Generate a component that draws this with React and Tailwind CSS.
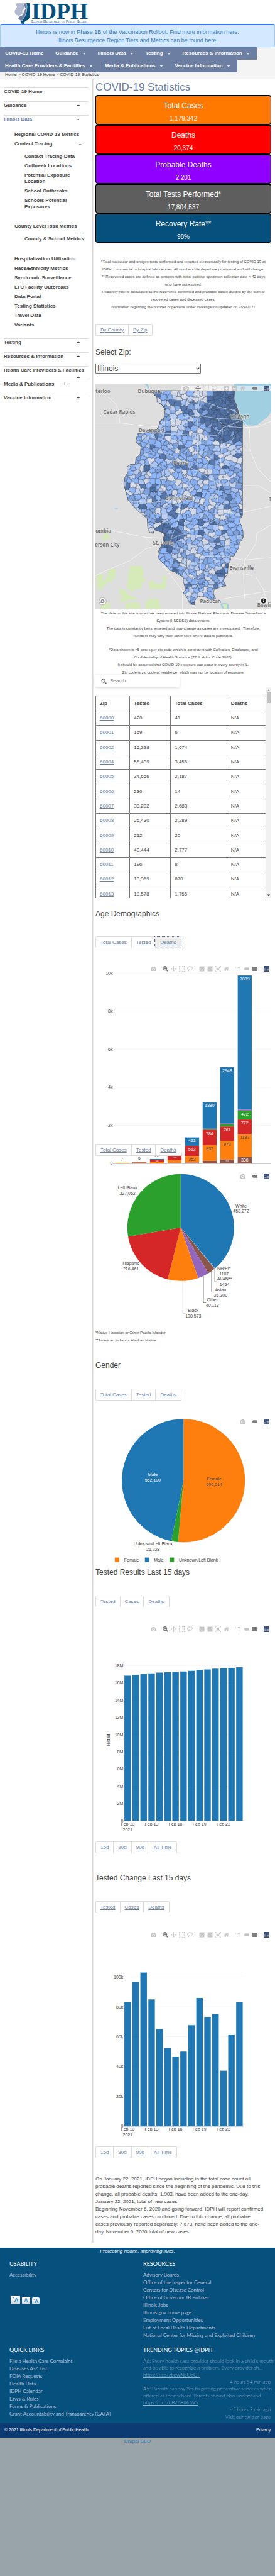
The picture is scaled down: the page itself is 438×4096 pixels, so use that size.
import React from 'react';

const ICONS = {
  camera: { w: 1000, d: 'm500 450c-83 0-150-67-150-150 0-83 67-150 150-150 83 0 150 67 150 150 0 83-67 150-150 150z m400 150h-120c-16 0-34 13-39 29l-31 93c-6 15-23 28-40 28h-340c-16 0-34-13-39-28l-31-94c-6-15-23-28-40-28h-120c-55 0-100-45-100-100v-450c0-55 45-100 100-100h800c55 0 100 45 100 100v450c0 55-45 100-100 100z m-400-550c-138 0-250 112-250 250 0 138 112 250 250 250 138 0 250-112 250-250 0-138-112-250-250-250z m365 380c-19 0-35 16-35 35 0 19 16 35 35 35 19 0 35-16 35-35 0-19-16-35-35-35z' },
  zoom: { w: 1000, d: 'm1000-25l-250 251c40 63 63 138 63 218 0 224-182 406-407 406-224 0-406-182-406-406s183-406 407-406c80 0 155 22 218 62l250-250 125 125z m-812 250l0 438 437 0 0-438-437 0z m62 375l313 0 0-312-313 0 0 312z' },
  pan: { w: 1000, d: 'm1000 350l-187 188 0-125-250 0 0 250 125 0-188 187-187-187 125 0 0-250-250 0 0 125-188-188 186-187 0 125 252 0 0-250-125 0 187-188 188 188-125 0 0 250 250 0 0-126 187 188z' },
  select: { w: 1000, d: 'm0 850l0-143 143 0 0 143-143 0z m286 0l0-143 143 0 0 143-143 0z m285 0l0-143 143 0 0 143-143 0z m286 0l0-143 143 0 0 143-143 0z m-857-286l0-143 143 0 0 143-143 0z m857 0l0-143 143 0 0 143-143 0z m-857-285l0-143 143 0 0 143-143 0z m857 0l0-143 143 0 0 143-143 0z m-857-286l0-143 143 0 0 143-143 0z m286 0l0-143 143 0 0 143-143 0z m285 0l0-143 143 0 0 143-143 0z m286 0l0-143 143 0 0 143-143 0z' },
  lasso: { w: 1031, d: 'm1018 538c-36 207-290 336-568 286-277-48-473-256-436-463 10-57 36-108 76-151-13-66 11-137 68-183 34-28 75-41 114-42l-55-70 0 0c-2-1-3-2-4-3-10-14-8-34 5-45 14-11 34-8 45 4 1 1 2 3 2 5l0 0 113 140c16 11 31 24 45 40 4 3 6 7 8 11 48-3 100 0 151 9 278 48 473 255 436 462z m-624-379c-80 14-149 48-197 96 42 42 109 47 156 9 33-26 47-66 41-105z m-187-74c-19 16-33 37-39 60 50-32 109-55 174-68-42-25-95-24-135 8z m360 75c-34-7-69-9-102-8 8 62-16 128-68 170-73 59-175 54-244-5-9 20-16 40-20 61-28 159 121 317 333 354s407-60 434-217c28-159-121-318-333-355z' },
  plus: { w: 875, d: 'm1 787l0-875 875 0 0 875-875 0z m687-500l-187 0 0-187-125 0 0 187-188 0 0 125 188 0 0 187 125 0 0-187 187 0 0-125z' },
  minus: { w: 875, d: 'm0 788l0-876 876 0 0 876-876 0z m688-500l-500 0 0 125 500 0 0-125z' },
  autoscale: { w: 1000, d: 'm250 850l-187 0-63 0 0-62 0-188 63 0 0 188 187 0 0 62z m688 0l-188 0 0-62 188 0 0-188 62 0 0 188 0 62-62 0z m-875-938l0 188-63 0 0-188 0-62 63 0 187 0 0 62-187 0z m875 188l0-188-188 0 0-62 188 0 62 0 0 62 0 188-62 0z m-125 188l-1 0-93-94-156 156 156 156 92-93 2 0 0 250-250 0 0-2 93-92-156-156-156 156 94 92 0 2-250 0 0-250 0 0 93 93 157-156-157-156-93 94 0 0 0-250 250 0 0 0-94 93 156 157 156-157-93-93 0 0 250 0 0 250z' },
  home: { w: 928, d: 'm786 296v-267q0-15-11-26t-25-10h-214v214h-143v-214h-214q-15 0-25 10t-11 26v267q0 1 0 2t0 2l321 264 321-264q1-1 1-4z m124 39l-34-41q-5-5-12-6h-2q-7 0-12 3l-386 322-386-322q-7-4-13-4-7 2-12 7l-35 41q-4 5-3 13t6 12l401 334q18 15 42 15t43-15l136-114v109q0 8 5 13t13 5h107q8 0 13-5t5-13v-227l122-102q5-5 6-12t-4-13z' },
  spike: { w: 1000, t: 'matrix(1.5 0 0 -1.5 0 850)', d: 'M512 409c0-57-46-104-103-104-57 0-104 47-104 104 0 57 47 103 104 103 57 0 103-46 103-103z m-327-39l92 0 0 92-92 0z m-185 0l92 0 0 92-92 0z m370-186l92 0 0 93-92 0z m0-184l92 0 0 92-92 0z' },
  tag: { w: 1500, d: 'm375 725l0 0-375-375 375-374 0-1 1125 0 0 750-1125 0z' },
  compare: { w: 1125, d: 'm187 786l0 2-187-188 188-187 0 0 937 0 0 373-938 0z m0-499l0 1-187-188 188-188 0 0 937 0 0 376-938-1z' },
};

function Icon({ name, on }) {
  if (name === 'logo') {
    return (
      <svg viewBox="0 0 132 132" className="block size-[9px]">
        <rect width="132" height="132" rx="4" fill="#3F4F75" />
        <g fill="#80CFBE">
          <circle cx="30" cy="30" r="6" /><circle cx="54" cy="30" r="6" /><circle cx="78" cy="30" r="6" />
          <circle cx="102" cy="30" r="6" /><circle cx="30" cy="54" r="6" /><circle cx="78" cy="54" r="6" />
        </g>
        <path fill="#fff" d="M24 78h12v30h-12zM48 54h12v54h-12zM72 78h12v30h-12zM96 54h12v54h-12z" />
      </svg>
    );
  }
  const icon = ICONS[name];
  return (
    <svg viewBox={`0 0 ${icon.w} 1000`} className="block size-[9px]" fill={on ? '#7c7c7c' : '#c6c6c6'}>
      <path transform={icon.t || 'matrix(1 0 0 -1 0 850)'} d={icon.d} />
    </svg>
  );
}

const FULL = [['camera'], ['zoom', 'pan', 'select', 'lasso'], ['plus', 'minus', 'autoscale', 'home'], ['spike', 'tag', 'compare'], ['logo']];
const PIE = [['camera'], ['tag'], ['logo']];
const MAP = [['camera'], ['pan', 'select', 'lasso'], ['plus', 'minus', 'home'], ['tag'], ['logo']];

function Modebar({ groups, active, tint }) {
  return (
    <div className={`absolute right-0 top-[6px] flex gap-[10px] px-[3px] ${tint ? 'bg-white/50' : ''}`}>
      {groups.map((g, i) => (
        <div key={i} className="flex gap-[4px]">
          {g.map((n) => (
            <button key={n} type="button" aria-label={n} className="block">
              <Icon name={n} on={active.includes(n)} />
            </button>
          ))}
        </div>
      ))}
    </div>
  );
}

function T({ x, y, a = 'middle', s = 7, f = '#444', children, ...r }) {
  return (
    <text x={x} y={y + s * 0.35} textAnchor={a} fontSize={s} fill={f} {...r}>{children}</text>
  );
}

function Tabs({ items, active, className = '' }) {
  return (
    <div className={`flex ${className}`}>
      <div className="flex h-[19px] rounded-[2px] border border-[#ddd] bg-white">
        {items.map((t, i) => (
          <a
            key={t}
            href={`#${t}`}
            className={`flex items-center px-[7px] text-[8px] text-[#6c7fa3] underline ${i ? 'border-l border-[#ddd]' : ''} ${active === t ? 'bg-[#eee] outline-1 outline-dotted outline-[#5a6f9a]' : ''}`}
          >
            {t}
          </a>
        ))}
      </div>
    </div>
  );
}

/* ---------- map ---------- */
const OUTLINE = 'M915 73L1338 75L1336 130L1350 165L1362 215L1370 240L1384 265L1384 870L1372 890L1366 910L1378 935L1386 970L1388 1010L1378 1030L1366 1045L1360 1080L1345 1110L1335 1130L1312 1130L1317 1155L1303 1180L1298 1245L1280 1270L1275 1290L1290 1320L1250 1330L1222 1345L1218 1370L1230 1400L1222 1408L1205 1410L1180 1395L1150 1385L1130 1390L1110 1415L1110 1440L1085 1437L1070 1400L1047 1365L1060 1345L1047 1295L1045 1262L1020 1250L1000 1232L972 1222L955 1200L920 1165L902 1140L902 1105L917 1070L935 1040L932 1015L942 990L915 975L880 962L875 985L855 980L843 950L840 890L790 845L732 775L718 720L707 670L712 630L727 600L725 560L745 545L772 542L776 505L800 480L805 430L775 400L785 350L830 342L880 335L905 308L912 270L935 250L942 200L930 170L897 145L895 115L868 88Z';
const SHADES = ['#8fb6f8', '#7da2dd', '#a9c6f6', '#d3dbea', '#5577ae', '#bccff0', '#4c6ea3', '#89aff0'];

function buildZips() {
  let s = 77;
  const rnd = () => {
    s = (s * 1664525 + 1013904223) % 4294967296;
    return s / 4294967296;
  };
  const X0 = 700, Y0 = 70, C = 6, W = 116, H = 230;
  const seeds = [];
  for (let gy = 0; gy < 44; gy++) {
    for (let gx = 0; gx < 23; gx++) {
      const x = (gx + rnd()) * 30.5, y = (gy + rnd()) * 31.5;
      const near = Math.hypot(x - 630, y - 150);
      const south = Math.hypot(x - 260, y - 930);
      const r = rnd();
      let c;
      if (near < 190 || south < 80) c = r < 0.75 ? (r < 0.4 ? 4 : 6) : 1;
      else c = r < 0.28 ? 0 : r < 0.4 ? 1 : r < 0.53 ? 2 : r < 0.68 ? 3 : r < 0.76 ? 4 : r < 0.86 ? 5 : r < 0.89 ? 6 : 7;
      seeds.push([x, y, c]);
    }
  }
  for (let i = 0; i < 170; i++) {
    seeds.push([690 - rnd() * rnd() * 210, 5 + rnd() * 270, rnd() < 0.5 ? 4 : 6]);
  }
  const grid = [];
  for (let j = 0; j < H; j++) {
    const row = [];
    for (let i = 0; i < W; i++) {
      const x = i * C + (rnd() - 0.5) * 5, y = j * C + (rnd() - 0.5) * 5;
      let best = 0, bd = 1e9;
      for (let k = 0; k < seeds.length; k++) {
        const dx = seeds[k][0] - x, dy = seeds[k][1] - y;
        const d = Math.max(Math.abs(dx), Math.abs(dy)) * 1.1 + (Math.abs(dx) + Math.abs(dy)) * 0.4;
        if (d < bd) { bd = d; best = k; }
      }
      row.push(best);
    }
    grid.push(row);
  }
  const fills = SHADES.map(() => '');
  let edges = '';
  for (let j = 0; j < H; j++) {
    let st = 0;
    for (let i = 1; i <= W; i++) {
      if (i === W || grid[j][i] !== grid[j][st]) {
        const c = seeds[grid[j][st]][2];
        fills[c] += `M${X0 + st * C} ${Y0 + j * C}h${(i - st) * C}v${C + 1}h-${(i - st) * C}z`;
        st = i;
      }
    }
    for (let i = 0; i < W; i++) {
      if (i && grid[j][i] !== grid[j][i - 1]) edges += `M${X0 + i * C} ${Y0 + j * C}v${C}`;
      if (j && grid[j][i] !== grid[j - 1][i]) edges += `M${X0 + i * C} ${Y0 + j * C}h${C}`;
    }
  }
  return { fills, edges };
}
const ZIPS = buildZips();

const CITIES = [
  ['Dubuque', 851, 76], ['Cedar Rapids', 681, 211], ['Chicago', 1367, 236], ['Davenport', 866, 326],
  ['Peoria', 1034, 536], ['Springfield', 1024, 759], ['St. Louis', 931, 1046], ['Evansville', 1378, 1204], ['Paducah', 1201, 1418],
  ['Waterloo', 566, 76], ['Columbia', 568, 968], ['Jefferson City', 589, 1058], ['Indianapolis', 1622, 767], ['Bowling Green', 1570, 1441],
];

function ZipMap() {
  return (
    <div className="relative mt-4 h-[358px] overflow-hidden">
      <svg viewBox="0 0 280 358" className="block h-full w-full" role="img" aria-label="Cases by zip code">
        <defs><clipPath id="il"><path d={OUTLINE} /></clipPath></defs>
        <rect width="280" height="358" fill="#dedede" />
        <g transform="scale(.2793 .2491) translate(-545 -29)">
          <path fill="#9fcfe0" d="M1336 29H1550V205L1528 240L1500 265L1470 290L1440 298L1390 292L1384 262L1362 190L1338 130ZM820 29L845 33L855 70L848 60L835 40ZM650 828L665 824L678 828L665 832ZM1255 1432L1270 1465H1305V1440L1290 1430Z" />
          <path fill="#d5eab8" d="M1268 1440L1280 1465H1298L1292 1432ZM743 1193H806L818 1220V1260L836 1290L808 1300V1338H768V1360L740 1356V1338H722L732 1260ZM627 1207L660 1212V1270H640V1298H615L592 1320L578 1350L553 1325V1245L590 1243L585 1290L600 1285L612 1250ZM852 1300L870 1282L890 1305H930L925 1258L950 1255L946 1340H852ZM850 1403H910V1440L920 1465H830V1420ZM720 1426L800 1430V1465H712ZM585 1425L628 1430V1465H572ZM600 980L618 985L628 1022H605L590 1032L582 1020ZM680 1340L710 1345L740 1380L770 1390L785 1420L750 1405L710 1420L680 1425L700 1390L680 1370Z" />
          <g fill="none" stroke="#f6f6f6" strokeWidth="3">
            <path d="M590 90L655 150L675 190L685 280M545 281H700L830 300L905 305M1384 262L1425 320L1420 440L1470 570L1547 660M1384 310L1470 305L1547 270M1384 678L1480 680L1547 730M1384 850L1440 838L1547 810M640 967L830 1010L930 1015M935 1045L830 1085L740 1160L630 1210L545 1255M935 1060L895 1120L960 1230L1040 1350L1042 1465M1547 930L1465 985L1460 1050L1395 1160L1390 1250L1395 1400M1320 1140L1390 1155L1547 1140M1240 1410L1370 1385L1547 1350M1380 1240L1440 1255M1460 1260L1500 1340L1540 1465M820 1005L870 1060L930 1045" />
          </g>
          <g clipPath="url(#il)">
            {ZIPS.fills.map((d, i) => <path key={i} d={d} fill={SHADES[i]} />)}
            <path d={ZIPS.edges} fill="none" stroke="#3f4754" strokeWidth="2" />
            <g fill="none" stroke="#e4e9f2" strokeOpacity=".8" strokeWidth="3">
              <path d="M905 300L970 265L1110 230L1240 250L1384 262M905 345L1070 355L1240 360L1270 310L1384 262M1140 75L1125 300L1130 590L1250 670H1384M1140 130L1250 180L1340 200L1384 262M905 460L1000 500L1125 590L1050 690L1025 760L1020 900L975 1020L1140 950L1300 860L1384 850M730 775L860 790L1024 760M1340 360L1310 420L1215 480L1170 560L1130 590M935 1045L1080 1100L1150 1130H1320M1140 1020L1145 1250L1120 1300L1165 1370M1270 310L1250 700L1225 890L1140 950M1240 250L1275 300L1384 310" />
            </g>
          </g>
          <path d={OUTLINE} fill="none" stroke="#444" strokeWidth="2.5" />
        </g>
        <g fontFamily="'Noto Sans', sans-serif" fontWeight="600" fontSize="8" fill="#707070" stroke="#e8e8e8" strokeWidth="1.2" paintOrder="stroke" strokeOpacity=".7">
          {CITIES.map(([n, x, y]) => (
            <text key={n} x={(x - 545) * 0.2793} y={(y - 29) * 0.2491 + 3} textAnchor="middle">{n}</text>
          ))}
        </g>
        <circle cx="11.500" cy="346" r="5.700" fill="#fff" stroke="#999" strokeWidth=".7" />
        <path d="M8.500 349v-3a3 3 0 1 1 3 3z" fill="#888" />
        <path d="M11.500 344.300v3.400M9.800 346h3.400" stroke="#fff" strokeWidth=".9" />
        <circle cx="267.700" cy="345.500" r="6.500" fill="#fff" fillOpacity=".6" />
        <circle cx="267.700" cy="345.500" r="4" fill="#222" />
        <path d="M267.700 342.800v1M267.700 344.600v3.400" stroke="#fff" strokeWidth="1.200" />
      </svg>
      <div className="absolute inset-x-0 -top-[3px]">
        <Modebar groups={MAP} active={['pan', 'tag']} tint />
      </div>
    </div>
  );
}

/* ---------- charts ---------- */
const B = '#1f77b4', O = '#ff7f0e', G = '#2ca02c', R = '#d62728', P = '#9467bd', N = '#8c564b';

// Each bar lists its segments as [colour, top, bottom] in chart units.
const AGE = [
  [[O, 319, 320]],
  [[B, 318, 318.6], [R, 318.6, 319.2], [O, 319.2, 320]],
  [[B, 313, 314.2], [R, 314.2, 317.7], [O, 317.7, 320]],
  [[B, 303, 306], [R, 306, 314.7], [O, 314.7, 319.3], [N, 319.3, 320]],
  [[B, 278.6, 292], [P, 292, 292.4], [R, 292.4, 308.2], [O, 308.2, 318.6], [N, 318.6, 320]],
  [[B, 222.5, 263.9], [P, 263.9, 265.1], [G, 265.1, 266.5], [R, 266.5, 290.9], [O, 290.9, 315.8], [N, 315.8, 320]],
  [[B, 166.8, 256.1], [P, 256.1, 257.7], [G, 257.7, 261.2], [R, 261.2, 284.1], [O, 284.1, 313.8], [N, 313.8, 320]],
  [[B, 21.1, 234.3], [P, 234.3, 236], [G, 236, 250.1], [R, 250.1, 273.5], [O, 273.5, 309.8], [N, 309.8, 320]],
];
const AGE_LABELS = [
  [0, 313.5, '7', '#444'], [1, 312, '6', '#444'], [2, 308, '26', '#444'],
  [2, 315.8, '106', '#fff', 3], [3, 310.3, '259', '#fff', 4], [2, 318.7, '5', '#444', 2], [3, 317, '94', '#444', 2],
  [4, 283.9, '433', '#fff'], [4, 297.8, '513', '#fff'], [4, 313.1, '352', '#444'],
  [5, 227.9, '1380', '#fff'], [5, 272.1, '784', '#fff'], [5, 296.2, '837', '#444'],
  [6, 172.1, '2948', '#fff'], [6, 266.5, '761', '#fff'], [6, 289.5, '973', '#444'], [6, 316.8, '203', '#fff', 3],
  [7, 26.6, '7039', '#fff'], [7, 241.3, '472', '#fff'], [7, 255.2, '772', '#fff'], [7, 278.8, '1187', '#444'], [7, 314.2, '336', '#fff'],
];

function AgeChart() {
  const ticks = ['0', '2k', '4k', '6k', '8k', '10k'];
  const x = (i) => 31 + i * 27.95;
  return (
    <div className="relative mt-[22px]">
      <svg viewBox="0 0 280 325" className="block w-full">
        {ticks.map((t, i) => (
          <g key={t}>
            <line x1="28" x2="280" y1={320 - i * 60.56} y2={320 - i * 60.56} stroke={i ? '#eee' : '#555'} strokeWidth=".6" />
            <T x={27.5} y={320 - i * 60.56} a="end">{t}</T>
          </g>
        ))}
        {AGE.map((bar, i) => bar.map(([c, a, b], k) => <rect key={`${i}-${k}`} x={x(i)} y={a} width="22.300" height={b - a} fill={c} />))}
        {AGE_LABELS.map(([i, y, t, f, s], k) => <T key={k} x={x(i) + 11.1} y={y} f={f} s={s || 7}>{t}</T>)}
      </svg>
      <Modebar groups={FULL} active={['zoom', 'compare']} />
    </div>
  );
}

function slices(cx, cy, r, data) {
  const total = data.reduce((s, d) => s + d[0], 0);
  let a = 0;
  return data.map(([v, c], i) => {
    const b = a + (v / total) * Math.PI * 2;
    const d = `M${cx} ${cy}L${cx + r * Math.sin(a)} ${cy - r * Math.cos(a)}A${r} ${r} 0 ${b - a > Math.PI ? 1 : 0} 1 ${cx + r * Math.sin(b)} ${cy - r * Math.cos(b)}Z`;
    a = b;
    return <path key={i} d={d} fill={c} />;
  });
}

function RacePie() {
  const labels = [
    ['Left Blank', '327,062', 51.100, 28.600], ['White', '458,272', 232, 57.100], ['Hispanic', '216,461', 56.600, 148.700],
    ['NH/PI*', '1107', 204.700, 157], ['AI/AN**', '1454', 205.500, 173.700], ['Asian', '26,300', 199.400, 190.500],
    ['Other', '40,113', 186.300, 206.700], ['Black', '108,573', 155.800, 223.600],
  ];
  return (
    <div className="relative mt-[22px]">
      <svg viewBox="0 0 280 240" className="block w-full">
        {slices(135.8, 91.8, 85, [[458272, B], [1107, '#8fb0c9'], [1454, '#5a8db5'], [26300, N], [40113, P], [108573, O], [216461, R], [327062, G]])}
        <path d="M190.100 157.500V178.300H193.700M185 160.700V194.700H188.900M172 168.800V211.400H176.200M139.400 176.700V227.800H143.600" fill="none" stroke="#444" strokeWidth=".7" />
        {labels.map(([a, b, x, y]) => (
          <g key={a}><T x={x} y={y}>{a}</T><T x={x} y={y + 8.600}>{b}</T></g>
        ))}
      </svg>
      <Modebar groups={PIE} active={['tag']} />
    </div>
  );
}

function GenderPie() {
  return (
    <div className="relative mt-[23px]">
      <svg viewBox="0 0 280 237" className="block w-full">
        {slices(140.2, 104.3, 98.1, [[606014, O], [21228, G], [552100, B]])}
        <T x={91.3} y={94.6} f="#fff">Male</T><T x={91.3} y={103.300} f="#fff">552,100</T>
        <T x={189.1} y={101.800}>Female</T><T x={189.1} y={110.500}>606,014</T>
        <T x={91.8} y={205}>Unknown/Left Blank</T><T x={91.8} y={213.400}>21,228</T>
        <rect x="31" y="226.600" width="7" height="7" fill={O} /><T x={45.8} y={230.100} a="start">Female</T>
        <rect x="78.700" y="226.600" width="7" height="7" fill={B} /><T x={93.2} y={230.100} a="start">Male</T>
        <rect x="118.300" y="226.600" width="7" height="7" fill={G} /><T x={133} y={230.100} a="start">Unknown/Left Blank</T>
      </svg>
      <Modebar groups={PIE} active={['tag']} />
    </div>
  );
}

function DayChart({ height, base, step, ticks, tops, title }) {
  return (
    <div className="relative mt-6">
      <svg viewBox={`0 0 280 ${height}`} className="block w-full">
        {ticks.map((t, i) => (
          <g key={t}>
            <line x1="45" x2="235.600" y1={base - i * step} y2={base - i * step} stroke={i ? '#eee' : '#555'} strokeWidth={i ? 0.6 : 0.9} />
            <T x={44.3} y={base - i * step} a="end">{t}</T>
          </g>
        ))}
        {tops.map((v, i) => <rect key={i} x={46.1 + i * 12.72} y={base - v} width="10.400" height={v} fill={B} />)}
        {['Feb 10', 'Feb 13', 'Feb 16', 'Feb 19', 'Feb 22'].map((t, i) => <T key={t} x={51.3 + i * 38.15} y={base + 5}>{t}</T>)}
        <T x={51.3} y={base + 13.800}>2021</T>
        {title && <text x="23" y="187" transform="rotate(-90 23 187)" textAnchor="middle" fontSize="7" fill="#444">{title}</text>}
      </svg>
      <Modebar groups={FULL} active={['zoom', 'compare']} />
    </div>
  );
}
const RESULT_TOPS = [927, 932, 938, 942, 947, 949, 951, 954, 958, 963, 967, 972, 974, 977, 981].map((v) => v * 0.2491);
const CHANGE_TOPS = [83, 96.6, 103, 85, 65.1, 52.4, 46.7, 50, 67.7, 86, 73.3, 75.2, 37.2, 61.4, 83].map((v) => v * 2.371);

/* ---------- page parts ---------- */
function Logo() {
  return (
    <a href="#home" className="flex h-[38px] items-end pl-[23px]" aria-label="Illinois Department of Public Health">
      <svg viewBox="0 0 88 147" preserveAspectRatio="none" className="h-[33px] w-[25px]">
        <path d="M62 0H85L87 15L86 100L76 118L60 128L52 147L38 145L34 130L44 115L60 85L66 40Z" fill="#05507d" />
        <path d="M48 0H66L71 20L68 60L60 90L44 125L32 122L20 112L26 96L48 82L52 60L62 40Z" fill="#6c7fa3" stroke="#fff" strokeWidth="2" />
        <path d="M12 0H46L56 20L54 40L44 56L46 74L36 84L24 92L6 80L0 58L10 36L14 22L8 12Z" fill="#b4b9d2" stroke="#fff" strokeWidth="1" />
      </svg>
      <div className="ml-[2px] flex flex-col font-['Liberation_Serif',serif] text-[#05507d]">
        <span className="text-[36px] font-bold leading-[25px]">IDPH</span>
        <span className="whitespace-nowrap text-[6px] leading-[7px] [font-variant:small-caps]">Illinois Department of Public Health</span>
      </div>
    </a>
  );
}

const NAV = [
  [['COVID-19 Home', 0], ['Guidance', 1], ['Illinois Data', 1], ['Testing', 1], ['Resources & Information', 1]],
  [['Health Care Providers & Facilities', 1], ['Media & Publications', 1], ['Vaccine Information', 1]],
];

function TopNav() {
  return (
    <nav className="flex flex-col items-start bg-[#f4f4f4]">
      {NAV.map((row, i) => (
        <ul key={i} className="flex h-[20px] items-center bg-[#6c7fa3]">
          {row.map(([t, arrow]) => (
            <li key={t} className="whitespace-nowrap pl-[8px] pr-[11px]">
              <a href={`#${t}`} className="flex items-center text-[8px] font-bold text-white">
                {t}
                {arrow ? <svg viewBox="0 0 6 4" className="ml-[6px] h-[3px] w-[6px]"><path d="M0 0h6L3 4z" fill="#e4e8f0" /></svg> : null}
              </a>
            </li>
          ))}
        </ul>
      ))}
      <p className="h-[11px] pl-[8px] text-[7px] leading-[8px] text-[#444]">
        <a href="#home" className="underline">Home</a> » <a href="#covid" className="underline">COVID-19 Home</a> » COVID-19 Statistics
      </p>
    </nav>
  );
}

function SideTop({ t, sign, on, tight }) {
  return (
    <div className={`h-[22px] border-t border-[#ddd] leading-[12px] ${on ? 'text-[#6c7fa3]' : ''}`}>
      <a href={`#${t}`}>{t}</a>
      {sign && (
        <button type="button" className={`w-[5px] text-center font-bold text-[#444] ${tight ? 'ml-[14px]' : 'float-right mr-[14px]'}`}>{sign}</button>
      )}
    </div>
  );
}

function SideLink({ children, sign }) {
  return (
    <li className="flex justify-between pb-[5px]">
      <a href={`#${children}`}>{children}</a>
      {sign && <button type="button" className="mr-[12px] font-bold leading-[10px]">{sign}</button>}
    </li>
  );
}

function Sidebar() {
  return (
    <aside className="w-1/3 shrink-0 pl-[6px] pr-[5px] pt-[13px] text-[8px] font-bold text-[#444]">
      <SideTop t="COVID-19 Home" />
      <SideTop t="Guidance" sign="+" />
      <SideTop t="Illinois Data" sign="-" on />
      <ul className="pb-[11px] pl-[17px] pt-[4px] leading-[10px]">
        <SideLink>Regional COVID-19 Metrics</SideLink>
        <SideLink sign="-">Contact Tracing</SideLink>
        <li>
          <ul className="pb-[16px] pl-[16px] pt-[5px]">
            <SideLink>Contact Tracing Data</SideLink>
            <SideLink>Outbreak Locations</SideLink>
            <SideLink>Potential Exposure Location</SideLink>
            <SideLink>School Outbreaks</SideLink>
            <li className="w-[80px] pb-[5px]"><a href="#schools">Schools Potential Exposures</a></li>
          </ul>
        </li>
        <li className="flex flex-col">
          <a href="#risk">County Level Risk Metrics</a>
          <button type="button" className="mr-[12px] self-end font-bold leading-[10px]">-</button>
          <a href="#school-metrics" className="whitespace-nowrap pb-[22px] pl-[16px]">County &amp; School Metrics</a>
        </li>
        {['Hospitalization Utilization', 'Race/Ethnicity Metrics', 'Syndromic Surveillance', 'LTC Facility Outbreaks', 'Data Portal', 'Testing Statistics', 'Travel Data', 'Variants'].map((t) => <SideLink key={t}>{t}</SideLink>)}
      </ul>
      <SideTop t="Testing" sign="+" />
      <SideTop t="Resources & Information" sign="+" />
      <SideTop t="Health Care Providers & Facilities" sign="+" />
      <SideTop t="Media & Publications" sign="+" tight />
      <SideTop t="Vaccine Information" sign="+" />
    </aside>
  );
}

const STATS = [
  ['Total Cases', '1,179,342', 'bg-[#ff7900]'],
  ['Deaths', '20,374', 'bg-[#ff0000]'],
  ['Probable Deaths', '2,201', 'bg-[#9000ff]'],
  ['Total Tests Performed*', '17,804,537', 'bg-[#5e5e5e]'],
  ['Recovery Rate**', '98%', 'bg-[#05507d]'],
];

const ROWS = [
  ['60000', '420', '41'], ['60001', '159', '6'], ['60002', '15,338', '1,674'], ['60004', '55,439', '3,456'],
  ['60005', '34,656', '2,187'], ['60006', '230', '14'], ['60007', '30,202', '2,683'], ['60008', '26,430', '2,289'],
  ['60009', '212', '20'], ['60010', '40,444', '2,777'], ['60011', '196', '8'], ['60012', '13,369', '870'], ['60013', '19,578', '1,755'],
];

function ZipTable() {
  const cell = 'border border-[#777] px-[6px] py-0 text-left';
  return (
    <div className="flex h-[335px] overflow-hidden">
      <div className="min-w-0 flex-1 pt-[13px]">
        <table className="h-[328px] w-full table-fixed border-collapse text-[8px] leading-[10px] text-[#444]">
          <colgroup><col className="w-[20%]" /><col className="w-[24%]" /><col className="w-[33%]" /><col /></colgroup>
          <thead>
            <tr className="h-[24px]">{['Zip', 'Tested', 'Total Cases', 'Deaths'].map((h) => <th key={h} className={`${cell} border-[#555]`}>{h}</th>)}</tr>
          </thead>
          <tbody>
            {ROWS.map(([z, t, c]) => (
              <tr key={z}>
                <td className={cell}><a href={`#${z}`} className="text-[#6c7fa3] underline">{z}</a></td>
                <td className={cell}>{t}</td>
                <td className={cell}>{c}</td>
                <td className={cell}>N/A</td>
              </tr>
            ))}
          </tbody>
        </table>
      </div>
      <div className="flex w-[8px] flex-col items-center bg-[#f1f1f1]">
        <svg viewBox="0 0 8 8" className="size-[8px]"><path d="M2 5.500h4L4 3z" fill="#a3a3a3" /></svg>
        <span className="h-[17px] w-[6px] bg-[#c1c1c1]" />
        <svg viewBox="0 0 8 8" className="mt-auto size-[8px]"><path d="M2 2.500h4L4 5z" fill="#505050" /></svg>
      </div>
    </div>
  );
}

const H2 = 'text-[12px] leading-[16px] text-[#444]';
const DEMO = ['Total Cases', 'Tested', 'Deaths'];
const TREND = ['Tested', 'Cases', 'Deaths'];
const SPAN = ['15d', '30d', '90d', 'All Time'];

function Main() {
  return (
    <main className="min-w-0 flex-1 bg-[linear-gradient(to_right,#c2c2c2,#fff_4px)] pb-[11px] pl-[6px] pr-[6px] pt-[2px]">
      <h1 className="mb-[2px] text-[17px] leading-[21px] text-[#6c7fa3]">COVID-19 Statistics</h1>
      {STATS.map(([t, v, bg]) => (
        <section key={t} className={`h-[47px] rounded-[4px] border border-t-2 border-black text-center text-white ${bg}`}>
          <h2 className="pt-[8px] text-[12px] leading-[14px]">{t}</h2>
          <p className="pt-[8px] text-[10px] leading-[12px]">{v}</p>
        </section>
      ))}
      <div className="mt-6 text-center text-[6px] leading-[12px] text-[#444]">
        <p>*Total molecular and antigen tests performed and reported electronically for testing of COVID-19 at<br />IDPH, commercial or hospital laboratories. All numbers displayed are provisional and will change.</p>
        <p>** Recovered cases are defined as persons with initial positive specimen collection date &gt; 42 days<br />who have not expired.</p>
        <p>Recovery rate is calculated as the recovered confirmed and probable cases divided by the sum of<br />recovered cases and deceased cases.</p>
        <p>Information regarding the number of persons under investigation updated on 2/24/2021.</p>
      </div>
      <Tabs items={['By County', 'By Zip']} className="mt-[21px]" />
      <label htmlFor="zip" className={`mt-[18px] block ${H2}`}>Select Zip:</label>
      <div className="relative mt-[10px] w-3/5">
        <select id="zip" className="block h-[16px] w-full appearance-none rounded-[1px] border border-[#767676] bg-white pl-[2px] text-[12px] leading-[14px] text-[#444]">
          <option>Illinois</option>
        </select>
        <svg viewBox="0 0 6 4" className="pointer-events-none absolute right-[2px] top-[6px] h-[4px] w-[6px]"><path d="M.700 .700L3 3L5.300 .700" fill="none" stroke="#333" strokeWidth="1.200" /></svg>
      </div>
      <ZipMap />
      <div className="mt-px text-center text-[6px] leading-[12px] text-[#444]">
        <p>The data on this site is what has been entered into Illinois' National Electronic Disease Surveillance<br />System (I-NEDSS) data system.</p>
        <p>The data is constantly being entered and may change as cases are investigated.&nbsp; Therefore,<br />numbers may vary from other sites where data is published.</p>
        <p className="mt-[10px]">*Data shown is &gt;5 cases per zip code which is consistent with Collection, Disclosure, and<br />Confidentiality of Health Statistics (77 Ill. Adm. Code 1005).</p>
        <p>It should be assumed that COVID-19 exposure can occur in every county in IL.</p>
        <p>Zip code is zip code of residence, which may not be location of exposure.</p>
      </div>
      <label className="relative -mt-[2px] flex h-[20px] w-[134px] items-center rounded-[2px] bg-white pl-[9px] shadow-[0_1px_4px_rgba(0,0,0,0.15)]">
        <svg viewBox="0 0 9 9" className="mr-[5px] size-[9px]"><circle cx="3.600" cy="3.600" r="2.600" fill="none" stroke="#444" /><path d="M5.500 5.500L8.500 8.300" stroke="#444" strokeWidth="1.200" /></svg>
        <input type="search" placeholder="Search" aria-label="Search" className="w-[100px] bg-transparent text-[8px] leading-[12px] placeholder:text-[#757575]" />
      </label>
      <ZipTable />

      <h2 className={`mt-[17px] ${H2}`}>Age Demographics</h2>
      <Tabs items={DEMO} active="Deaths" className="mt-[28px]" />
      <AgeChart />
      <Tabs items={DEMO} className="relative -mt-[36px]" />
      <RacePie />
      <div className="mt-[13px] text-[6px] leading-[12px] text-[#444]">
        <p>*Native Hawaiian or Other Pacific Islander</p>
        <p>**American Indian or Alaskan Native</p>
      </div>

      <h2 className={`mt-[26px] ${H2}`}>Gender</h2>
      <Tabs items={DEMO} className="mt-[29px]" />
      <GenderPie />

      <h2 className={`mt-[5px] ${H2}`}>Tested Results Last 15 days</h2>
      <Tabs items={TREND} className="mt-[29px]" />
      <DayChart height={335} base={315.4} step={27.46} title="Tested" ticks={['0', '2M', '4M', '6M', '8M', '10M', '12M', '14M', '16M', '18M']} tops={RESULT_TOPS} />
      <Tabs items={SPAN} className="mt-[13px]" />

      <h2 className={`mt-[31px] ${H2}`}>Tested Change Last 15 days</h2>
      <Tabs items={TREND} className="mt-[29px]" />
      <DayChart height={334} base={314.8} step={47.42} ticks={['0', '20k', '40k', '60k', '80k', '100k']} tops={CHANGE_TOPS} />
      <Tabs items={SPAN} className="mt-[13px]" />

      <p className="mt-[27px] text-[8px] leading-[12px] text-[#444]">
        On January 22, 2021, IDPH began including in the total case count all<br />probable deaths reported since the beginning of the pandemic. Due to this<br />change, all probable deaths, 1,903, have been added to the one-day,<br />January 22, 2021, total of new cases.<br />
        Beginning November 6, 2020 and going forward, IDPH will report confirmed<br />cases and probable cases combined. Due to this change, all probable<br />cases previously reported separately, 7,673, have been added to the one-<br />day, November 6, 2020 total of new cases
      </p>
    </main>
  );
}

function FooterList({ title, items }) {
  return (
    <section>
      <h2 className="text-[9px] leading-[12px] text-white">{title}</h2>
      <ul className="mt-[5px] text-[8px] leading-[12px] text-[#b3bdd6]">
        {items.map((t) => <li key={t} className="whitespace-nowrap"><a href={`#${t}`}>{t}</a></li>)}
      </ul>
    </section>
  );
}

function SizeButton({ label, sign, size }) {
  return (
    <button type="button" aria-label={label} className={`flex items-center justify-center rounded-[2px] bg-gradient-to-b from-white to-[#cfd8de] font-bold text-[#2a87bd] ${size}`}>
      {sign && <span className="self-start text-[5px] leading-[6px]">{sign}</span>}A
    </button>
  );
}

function Footer() {
  return (
    <footer>
      <div className="bg-[#05507d] pb-[4px]">
        <p className="text-center text-[8px] italic leading-[12px] text-white">Protecting health, improving lives.</p>
        <div className="mt-[8px] grid grid-cols-2 gap-y-[12px] font-['Lato',sans-serif]">
          <div className="pl-[15px]">
            <FooterList title="USABILITY" items={['Accessibility']} />
            <div className="mt-[27px] flex items-end gap-[3px] pl-[2px]">
              <SizeButton label="Increase text size" sign="+" size="h-[14px] w-[15px] text-[10px]" />
              <SizeButton label="Reset text size" size="h-[12px] w-[13px] text-[9px]" />
              <SizeButton label="Decrease text size" sign="-" size="h-[11px] w-[12px] text-[8px]" />
            </div>
          </div>
          <div className="pl-[9px]">
            <FooterList title="RESOURCES" items={['Advisory Boards', 'Office of the Inspector General', 'Centers for Disease Control', 'Office of Governor JB Pritzker', 'Illinois Jobs', 'Illinois.gov home page', 'Employment Opportunities', 'List of Local Health Departments', 'National Center for Missing and Exploited Children']} />
          </div>
          <div className="pl-[15px]">
            <FooterList title="QUICK LINKS" items={['File a Health Care Complaint', 'Diseases A-Z List', 'FOIA Requests', 'Health Data', 'IDPH Calendar', 'Laws & Rules', 'Forms & Publications', 'Grant Accountability and Transparency (GATA)']} />
          </div>
          <section className="pl-[9px] pr-[7px]">
            <h2 className="text-[9px] leading-[12px] text-white">TRENDING TOPICS @IDPH</h2>
            <div className="mt-[6px] whitespace-nowrap text-[8px] font-light leading-[11px] text-[#9db4cd]">
              <p>A6: Every health care provider should look in a child’s mouth<br />and be able to recognize a problem. Every provider sh…<br /><a href="#t1" className="underline">https://t.co/zbpwNbOqQF</a></p>
              <p className="text-right">- <em>4 hours 54 min</em> ago</p>
              <p>A5: Parents can say Yes to getting preventive services when<br />offered at their school. Parents should also understand…<br /><a href="#t2" className="underline">https://t.co/hBZ6FfRcWS</a></p>
              <p className="text-right">- <em>5 hours 3 min</em> ago</p>
              <p className="text-right"><a href="#twitter" className="leading-[12px]">Visit our twitter page</a></p>
            </div>
          </section>
        </div>
      </div>
      <div className="flex h-[23px] items-center justify-between bg-[#0c3a72] px-[7px] text-[7px] text-white">
        <span>© 2021 Illinois Department of Public Health.</span>
        <a href="#privacy">Privacy</a>
      </div>
      <p className="text-center text-[8px] leading-[11px]"><a href="#seo" className="text-[#337ab7]">Drupal SEO</a></p>
    </footer>
  );
}

export default function App() {
  return (
    <div className="min-h-screen bg-[#99a4a9] font-['Liberation_Sans',Arial,sans-serif]">
      <div className="bg-white pb-[8px]">
        <Logo />
        <div className="rounded-[3px] border border-t-2 border-[#9fcbff] border-t-[#2f7dfb] bg-[#d4e8ff] pb-[4px] pt-[5px] text-center text-[9px] leading-[12px] text-[#337ab7]">
          <p className="pb-px"><a href="#vaccine">Illinois is now in Phase 1B of the Vaccination Rollout. Find more information here.</a></p>
          <p><a href="#tiers">Illinois Resurgence Region Tiers and Metrics can be found here.</a></p>
        </div>
        <TopNav />
        <div className="flex">
          <Sidebar />
          <Main />
        </div>
      </div>
      <Footer />
    </div>
  );
}
